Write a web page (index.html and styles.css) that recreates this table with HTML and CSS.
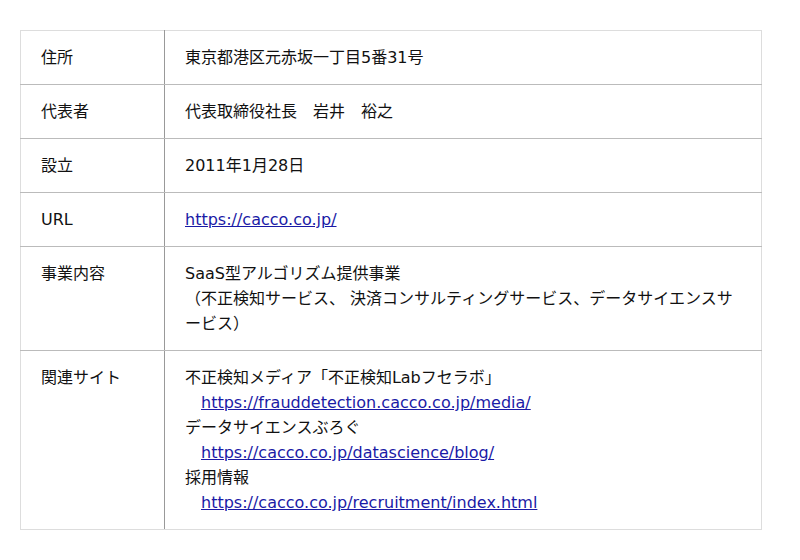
FILE: index.html
```html
<!DOCTYPE html>
<html lang="ja">
<head>
<meta charset="utf-8">
<link rel="stylesheet" href="styles.css">
</head>
<body>
<table class="info">
<tr><th>住所</th><td>東京都港区元赤坂一丁目5番31号</td></tr>
<tr><th>代表者</th><td>代表取締役社長　岩井　裕之</td></tr>
<tr><th>設立</th><td>2011年1月28日</td></tr>
<tr><th>URL</th><td><a href="#">https://cacco.co.jp/</a></td></tr>
<tr><th>事業内容</th><td>SaaS型アルゴリズム提供事業<br>（不正検知サービス、 決済コンサルティングサービス、データサイエンスサービス）</td></tr>
<tr><th>関連サイト</th><td>不正検知メディア「不正検知Labフセラボ」<br>　<a href="#">https://frauddetection.cacco.co.jp/media/</a><br>データサイエンスぶろぐ<br>　<a href="#">https://cacco.co.jp/datascience/blog/</a><br>採用情報<br>　<a href="#">https://cacco.co.jp/recruitment/index.html</a></td></tr>
</table>
</body>
</html>
```
FILE: styles.css
```css
html, body {
  margin: 0;
  background: #fff;
}
body {
  padding: 30px 38px 0 20px;
  font-family: "DejaVu Sans", "Noto Sans CJK JP", sans-serif;
  font-size: 16px;
  line-height: 25px;
  color: #111;
}
.info {
  width: 742px;
  border-collapse: collapse;
  border: 1px solid #ddd;
}
.info th, .info td {
  border-top: 1px solid #bbb;
  border-bottom: 1px solid #bbb;
  padding: 14px 20px 14px 20px;
  text-align: left;
  vertical-align: top;
  font-weight: normal;
}
.info tr:first-child th, .info tr:first-child td {
  border-top: 1px solid #ddd;
}
.info tr:last-child th, .info tr:last-child td {
  border-bottom: 1px solid #ddd;
}
.info th {
  width: 103px;
  border-right: 1px solid #999;
}
.info td {
  padding-left: 20px;
}
.info a {
  color: #1a1aa6;
}
```
